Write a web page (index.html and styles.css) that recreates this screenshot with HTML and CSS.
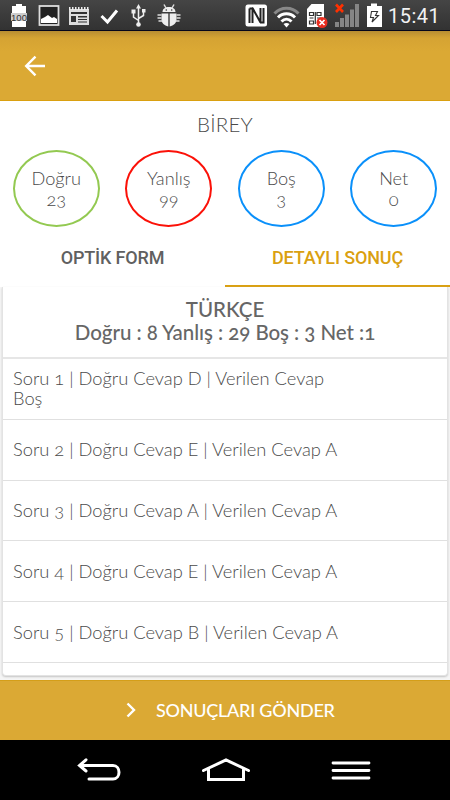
FILE: index.html
```html
<!DOCTYPE html>
<html lang="tr">
<head>
    <meta charset="UTF-8">
    <meta name="viewport" content="width=device-width, initial-scale=1.0">
    <title>Detaylı Sonuç</title>
    <link rel="stylesheet" href="styles.css">
</head>
<body>

    <!-- Status Bar -->
    <div class="status-bar">
        <svg class="status-icons" width="182" height="30" viewBox="0 0 182 30">
            <!-- Battery level -->
            <path fill="#fff" d="M16 4h6v2h4v7H12V6h4zM12 21h14v6H12z"/>
            <path fill="#ccc" d="M11 13h16v8H11z"/>
            <text class="battery-text" x="19" y="20.5" text-anchor="middle">100</text>
            <!-- Image -->
            <rect x="39.500" y="6" width="19" height="19" fill="#222" stroke="#ddd" stroke-width="1.800"/>
            <path fill="#fff" d="M41 23v-4l4-2 3-2 4 3 2-1 3 2v4z"/>
            <!-- News -->
            <path fill="#ddd" d="M69 9h20v16H69z"/>
            <path stroke="#eee" stroke-width="3" stroke-dasharray="1.500 1.500" d="M69 8.500h20"/>
            <path fill="#333" d="M71 12h16v2H71zM71 16h5v6h-5zM78 16h9v1.500h-9zM78 19h9v1h-9zM78 21.500h9v1h-9z"/>
            <!-- Check -->
            <path fill="none" stroke="#fff" stroke-width="3" d="M101.500 16l6 6L117 10.500"/>
            <!-- USB -->
            <g fill="none" stroke="#eee" stroke-width="1.500">
                <path d="M138.500 7v17M138.500 20.500l-5-3.500v-5M138.500 18.500l5-3v-4"/>
            </g>
            <path fill="#eee" d="M138.500 4l2.500 4.500h-5zM131.500 9.500h4v4h-4zM142 9h3.500v3.500H142z"/>
            <circle cx="138.500" cy="24.500" r="2.300" fill="#eee"/>
            <!-- Debug bug -->
            <path fill="#eee" d="M162.500 12c0-3 2.500-5 6.500-5s6.500 2 6.500 5zM161.500 13.500h6.800V26.500c-4-.8-6.800-3.500-6.800-7zM169.700 13.500h6.800v6c0 3.500-2.800 6.200-6.800 7z"/>
            <path fill="none" stroke="#ddd" stroke-width="1.500" d="M164 4.500l2 3.500M174 4.500l-2 3.500M157.500 15h4M157.500 18h4M158.500 21h4M176.500 15h4M176.500 18h4M175.500 21h4"/>
            <circle cx="166.300" cy="10" r=".8" fill="#333"/>
            <circle cx="171.700" cy="10" r=".8" fill="#333"/>
        </svg>
        <div class="status-right">
            <svg width="140" height="30" viewBox="243 0 140 30">
                <!-- NFC -->
                <rect x="245.500" y="4.500" width="21.500" height="22" rx="2.500" fill="#fff"/>
                <path fill="none" stroke="#222" stroke-width="2" d="M249.500 23V8.500M252.500 23V8l8 14.500V8M249.500 8.500h3.500M260 22.500h3.500V8"/>
                <!-- Wifi -->
                <g fill="none" stroke-width="3">
                    <path stroke="#888" d="M274.500 13.500c6.500-7 17.500-7 24 0"/>
                    <path stroke="#fff" d="M278 17.500c4.800-5 12.200-5 17 0M281.500 21.500c3-3 7-3 10 0"/>
                </g>
                <path fill="#fff" d="M283.500 24c2-1.500 4-1.500 6 0l-3 3.500z"/>
                <!-- SIM -->
                <path fill="#fff" d="M307 9l4.500-5H324v23h-17z"/>
                <path fill="none" stroke="#333" stroke-width="1.200" d="M309.500 12.500h4v3h-4zM317 12.500h4v3h-4zM309.500 18h4M317 18h4M309.500 21h4v3h-4zM315.300 12v12"/>
                <circle cx="322" cy="22.500" r="5.500" fill="#e92e20"/>
                <path stroke="#fff" stroke-width="1.700" d="M319.500 20l5 5M324.500 20l-5 5"/>
                <!-- Signal -->
                <path fill="#858585" d="M335 22h4v5h-4zM340 18h4v9h-4zM345 14.500h4V27h-4zM350 9.500h4V27h-4zM355 4h4v23h-4z"/>
                <path stroke="#ff3000" stroke-width="2.600" d="M336 4.500l7 7.500M343 4.500l-7 7.500"/>
                <!-- Charging battery -->
                <path fill="#fff" d="M371 3.500h6V6h5v21h-15V6h4z"/>
                <path fill="none" stroke="#333" stroke-width="1.100" d="M371.500 11.500h6l-2 4h3l-6.500 6.500 1.500-4.500h-3z"/>
            </svg>
            <span class="clock">15:41</span>
        </div>
    </div>

    <!-- App Bar -->
    <header class="app-bar">
        <svg width="22" height="22" viewBox="0 0 22 22">
            <path fill="none" stroke="#fff" stroke-width="2.400" d="M21 11H2.500M11.500 1.700L2.200 11l9.300 9.300"/>
        </svg>
    </header>

    <!-- Result Summary -->
    <section class="summary">
        <h1>BİREY</h1>
        <div class="scores">
            <div class="score correct"><span>Doğru</span><span>23</span></div>
            <div class="score wrong"><span>Yanlış</span><span>99</span></div>
            <div class="score blank"><span>Boş</span><span>3</span></div>
            <div class="score net"><span>Net</span><span>0</span></div>
        </div>
    </section>

    <!-- Tabs -->
    <nav class="tabs">
        <div class="tab"><span>OPTİK FORM</span></div>
        <div class="tab active"><span>DETAYLI SONUÇ</span></div>
    </nav>

    <!-- Answer List -->
    <main class="content">
        <div class="card">
            <div class="card-header">
                <h2 class="lesson">TÜRKÇE</h2>
                <h2>Doğru : 8 Yanlış : 29 Boş : 3 Net :1</h2>
            </div>
            <div class="row"><p>Soru 1 | Doğru Cevap D | Verilen Cevap<br>Boş</p></div>
            <div class="row"><p>Soru 2 | Doğru Cevap E | Verilen Cevap A</p></div>
            <div class="row"><p>Soru 3 | Doğru Cevap A | Verilen Cevap A</p></div>
            <div class="row"><p>Soru 4 | Doğru Cevap E | Verilen Cevap A</p></div>
            <div class="row"><p>Soru 5 | Doğru Cevap B | Verilen Cevap A</p></div>
        </div>
    </main>

    <!-- Send Button -->
    <button class="send-button">
        <svg width="10" height="16" viewBox="0 0 10 16">
            <path fill="none" stroke="#fff" stroke-width="2.400" d="M1.500 1.500L8 8l-6.500 6.500"/>
        </svg>
        <span>SONUÇLARI GÖNDER</span>
    </button>

    <!-- Phone Navigation -->
    <footer class="phone-nav">
        <svg width="45" height="24" viewBox="0 0 45 24">
            <path fill="none" stroke="#fff" stroke-width="3" stroke-linecap="round" d="M9 1.800L2.500 7.500 9 13M3 7.500h33c8 0 8 13.500 0 13.500H12"/>
        </svg>
        <svg width="50" height="24" viewBox="0 0 50 24">
            <path fill="none" stroke="#fff" stroke-width="3" stroke-linecap="round" d="M2.500 12.500L25 2l22.500 10.500M7.500 11v10.500h35V11"/>
        </svg>
        <svg width="40" height="24" viewBox="0 0 40 24">
            <path stroke="#fff" stroke-width="2.800" stroke-linecap="round" d="M2 5h36M2 12.500h36M2 20h36"/>
        </svg>
    </footer>

</body>
</html>
```
FILE: styles.css
```css
/* Basic Reset */
* {
    margin: 0;
    padding: 0;
    box-sizing: border-box;
}
body {
    width: 450px;
    height: 800px;
    display: flex;
    flex-direction: column;
    overflow: hidden;
    background: #fff;
    color: #4a4a4a;
    font-family: Lato, sans-serif;
    font-variant-numeric: oldstyle-nums;
}
svg {
    display: block;
    flex: none;
}

/* Status Bar */
.status-bar {
    height: 31px;
    display: flex;
    justify-content: space-between;
    background: linear-gradient(#454545, #323232);
    border-bottom: 1px solid #05051a;
}
.status-right {
    display: flex;
    align-items: center;
    padding-right: 9px;
}
.battery-text {
    font: 9.5px "Liberation Sans", sans-serif;
    fill: #333;
}
.clock {
    width: 53px;
    margin-left: 5px;
    padding-top: 2px;
    font: 20px Roboto, sans-serif;
    letter-spacing: 0.5px;
    color: #f2f2f2;
}

/* App Bar */
.app-bar {
    height: 70px;
    display: flex;
    align-items: center;
    padding-left: 24px;
    background: linear-gradient(#b88d32, #d5a333 7px, #dba934 20px);
    border-bottom: 1px solid #daa010;
}

/* Result Summary */
.summary {
    height: 127px;
    padding-top: 11px;
}
.summary h1 {
    height: 25px;
    font-size: 20.5px;
    font-weight: 300;
    line-height: 25px;
    letter-spacing: 0.2px;
    text-align: center;
}
.scores {
    display: flex;
    justify-content: space-around;
    padding-top: 13px;
}
.score {
    width: 87px;
    height: 77px;
    display: flex;
    flex-direction: column;
    align-items: center;
    justify-content: center;
    border: 2px solid #0a90fa;
    border-radius: 50%;
    font-size: 18.2px;
    font-weight: 300;
    line-height: 21px;
}
.correct {
    border-color: #93c951;
}
.wrong {
    border-color: #fb1108;
}

/* Tabs */
.tabs {
    height: 59px;
    display: flex;
}
.tab {
    flex: 1;
    padding-top: 18px;
    text-align: center;
    font: 500 18px/24px Roboto, sans-serif;
    letter-spacing: -0.15px;
    color: #606060;
}
.active {
    color: #daa010;
    border-bottom: 2px solid #daa010;
}

/* Answer List */
.content {
    height: 393px;
    padding: 0 2px 4px;
    background: #f5f5f5;
}
.card {
    height: 389px;
    background: #fff;
    border: 1px solid #e3e3e3;
    border-top: none;
    border-radius: 0 0 4px 4px;
    box-shadow: 0 1px 2px #c4c4c4;
}
.card-header {
    height: 72px;
    padding-top: 11px;
    border-bottom: 2px solid #e6e6e6;
    text-align: center;
}
.card-header h2 {
    font-size: 20.5px;
    font-weight: 500;
    line-height: 23px;
    letter-spacing: -0.05px;
    color: #666;
}
.card-header .lesson {
    letter-spacing: 0;
}
.row {
    height: 60.8px;
    display: flex;
    align-items: center;
    padding: 0 0 1px 10px;
    border-bottom: 1px solid #e0e0e0;
}
.row p {
    font-size: 18.3px;
    font-weight: 300;
    line-height: 20px;
    white-space: nowrap;
}

/* Send Button */
.send-button {
    height: 60px;
    display: flex;
    align-items: center;
    padding: 0 0 2px 126px;
    gap: 20px;
    border: none;
    border-top: 1px solid #d49e19;
    background: #dba934;
    color: #fff;
    font: 500 18px Lato, sans-serif;
    letter-spacing: -0.25px;
}

/* Phone Navigation */
.phone-nav {
    height: 60px;
    display: flex;
    align-items: center;
    gap: 79px;
    padding: 0 0 0 77px;
    background: #000;
}
.phone-nav svg:last-child {
    margin-left: 1px;
}
```
